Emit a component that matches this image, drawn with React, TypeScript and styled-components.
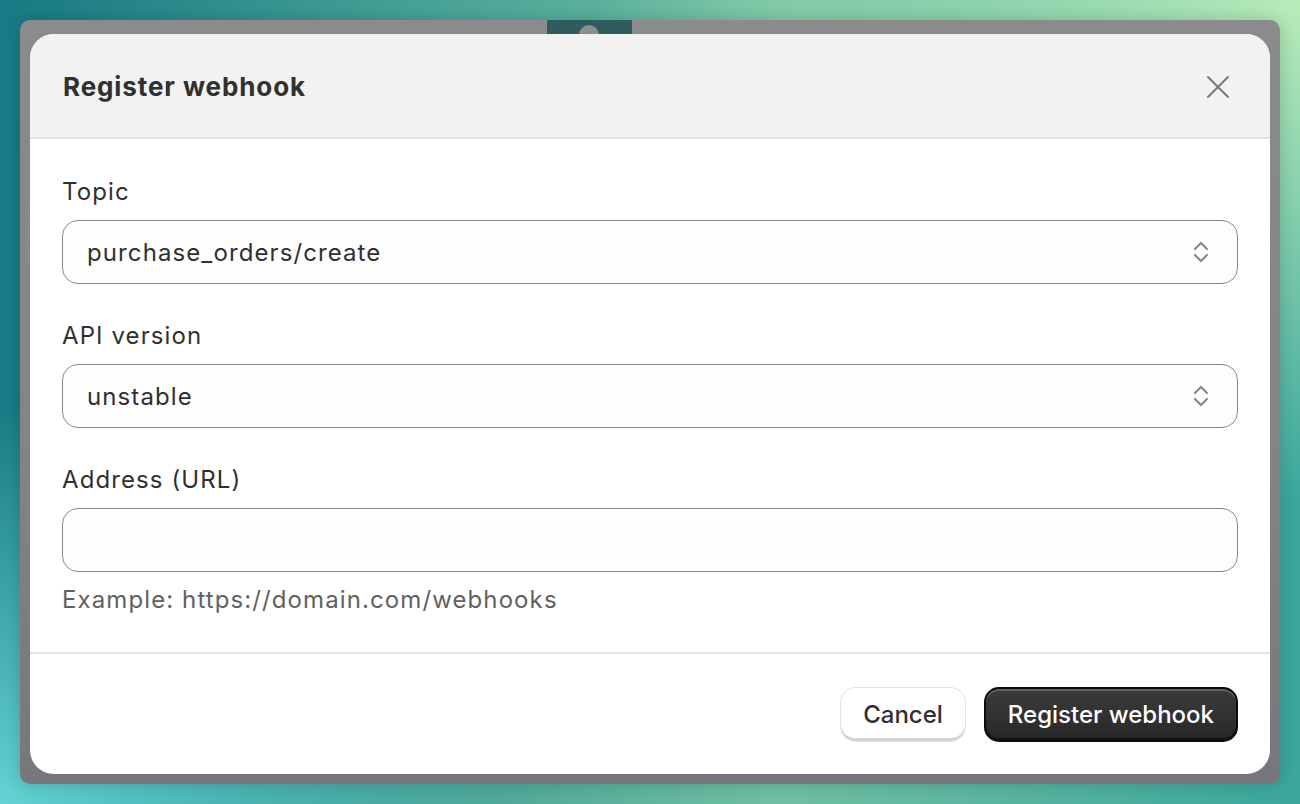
import styled, { createGlobalStyle } from 'styled-components';

const GlobalStyle = createGlobalStyle`
  html, body {
    margin: 0;
    padding: 0;
  }
  body {
    font-family: Inter, 'Noto Sans', 'Liberation Sans', sans-serif;
    color: #303030;
  }
  * {
    box-sizing: border-box;
  }
`;

function ChevronUpDown() {
  return (
    <svg width="20" height="28" viewBox="0 0 20 28" fill="none">
      <path d="M4 11 L10 5 L16 11" stroke="#8a8a8a" strokeWidth="2.2" strokeLinecap="round" strokeLinejoin="round" />
      <path d="M4 17 L10 23 L16 17" stroke="#8a8a8a" strokeWidth="2.2" strokeLinecap="round" strokeLinejoin="round" />
    </svg>
  );
}

function CloseIcon() {
  return (
    <svg width="24" height="24" viewBox="0 0 24 24" fill="none">
      <path d="M2 2 L22 22 M22 2 L2 22" stroke="#7a7a7a" strokeWidth="2" strokeLinecap="round" />
    </svg>
  );
}

function SelectField({ label, value }: { label: string; value: string }) {
  return (
    <Field>
      <Label>{label}</Label>
      <SelectBox>
        <SelectValue>{value}</SelectValue>
        <SelectIcon>
          <ChevronUpDown />
        </SelectIcon>
      </SelectBox>
    </Field>
  );
}

export default function App() {
  return (
    <>
      <GlobalStyle />
      <Page>
        <Backdrop>
          <PeekTab>
            <PeekDot />
          </PeekTab>
          <Modal>
            <Header>
              <Title>Register webhook</Title>
              <CloseButton aria-label="Close">
                <CloseIcon />
              </CloseButton>
            </Header>
            <Body>
              <SelectField label="Topic" value="purchase_orders/create" />
              <SelectField label="API version" value="unstable" />
              <Field>
                <Label>Address (URL)</Label>
                <TextInput type="text" />
                <HelpText>Example: https://domain.com/webhooks</HelpText>
              </Field>
            </Body>
            <Footer>
              <SecondaryButton>Cancel</SecondaryButton>
              <PrimaryButton>Register webhook</PrimaryButton>
            </Footer>
          </Modal>
        </Backdrop>
      </Page>
    </>
  );
}

const Page = styled.div`
  width: 1300px;
  height: 804px;
  padding: 20px;
  background:
    radial-gradient(ellipse 700px 500px at 100% 0%, #b8ecb9 0%, rgba(184, 236, 185, 0) 100%),
    radial-gradient(ellipse 500px 400px at 0% 100%, #63d3d3 0%, rgba(99, 211, 211, 0) 100%),
    linear-gradient(90deg, #177a84 0%, #4aa597 35%, #6fbfa2 60%, #3aa69c 100%);
`;

const Backdrop = styled.div`
  position: relative;
  height: 764px;
  padding: 14px 10px 10px;
  border-radius: 10px;
  background: linear-gradient(180deg, #8b8b8b 0%, #838384 60%, #77767b 100%);
  box-shadow: 0 0 16px rgba(0, 0, 0, 0.18);
`;

const PeekTab = styled.div`
  position: absolute;
  top: 0;
  left: 527px;
  width: 85px;
  height: 14px;
  background: #2f5c5e;
  overflow: hidden;
`;

const PeekDot = styled.div`
  position: absolute;
  top: 5px;
  left: 32px;
  width: 20px;
  height: 20px;
  border-radius: 50%;
  background: #8d8d8d;
`;

const Modal = styled.div`
  position: relative;
  display: flex;
  flex-direction: column;
  height: 740px;
  background: #ffffff;
  border-radius: 24px;
  overflow: hidden;
`;

const Header = styled.div`
  display: flex;
  align-items: center;
  justify-content: space-between;
  height: 105px;
  padding: 2px 35px 0 33px;
  background: #f2f2f2;
  border-bottom: 2px solid #e3e3e3;
`;

const Title = styled.h2`
  margin: 0;
  font-size: 26px;
  font-weight: 650;
  color: #303030;
  letter-spacing: 0.9px;
`;

const CloseButton = styled.button`
  display: flex;
  align-items: center;
  justify-content: center;
  width: 34px;
  height: 34px;
  padding: 0;
  border: none;
  background: transparent;
  cursor: pointer;
`;

const Body = styled.div`
  display: flex;
  flex-direction: column;
  gap: 36px;
  padding: 37px 32px 36px;
  border-bottom: 2px solid #e3e3e3;
`;

const Field = styled.div`
  display: flex;
  flex-direction: column;
  gap: 12px;
`;

const Label = styled.label`
  font-size: 24px;
  line-height: 32px;
  letter-spacing: 1.1px;
  color: #303030;
`;

const SelectBox = styled.div`
  position: relative;
  display: flex;
  align-items: center;
  height: 64px;
  padding: 0 24px;
  background: #fdfdfd;
  border: 1px solid #8a8a8a;
  border-radius: 16px;
`;

const SelectValue = styled.span`
  font-size: 24px;
  letter-spacing: 1.1px;
  color: #303030;
`;

const SelectIcon = styled.span`
  position: absolute;
  right: 26px;
  top: 50%;
  transform: translateY(-50%);
  display: flex;
`;

const TextInput = styled.input`
  height: 64px;
  padding: 0 24px;
  font-family: inherit;
  font-size: 24px;
  background: #fdfdfd;
  border: 1px solid #8a8a8a;
  border-radius: 16px;
  outline: none;
`;

const HelpText = styled.div`
  font-size: 24px;
  line-height: 32px;
  letter-spacing: 1.1px;
  color: #616161;
`;

const Footer = styled.div`
  flex: 1;
  display: flex;
  align-items: center;
  justify-content: flex-end;
  gap: 18px;
  padding: 0 32px;
`;

const SecondaryButton = styled.button`
  height: 55px;
  padding: 0 22px;
  font-family: inherit;
  font-size: 24px;
  font-weight: 550;
  color: #303030;
  background: #ffffff;
  border: 1px solid #e3e3e3;
  border-radius: 15px;
  box-shadow: inset 0 -3px 0 #d4d4d4;
  cursor: pointer;
`;

const PrimaryButton = styled.button`
  height: 55px;
  padding: 0 22px;
  font-family: inherit;
  font-size: 24px;
  font-weight: 550;
  color: #ffffff;
  background: linear-gradient(180deg, #3a3a3a 0%, #303030 60%, #262626 100%);
  border: 2px solid #0c0c0c;
  border-radius: 15px;
  box-shadow: inset 0 2px 0 rgba(255, 255, 255, 0.2), inset 0 -2px 0 rgba(0, 0, 0, 0.5);
  cursor: pointer;
`;
